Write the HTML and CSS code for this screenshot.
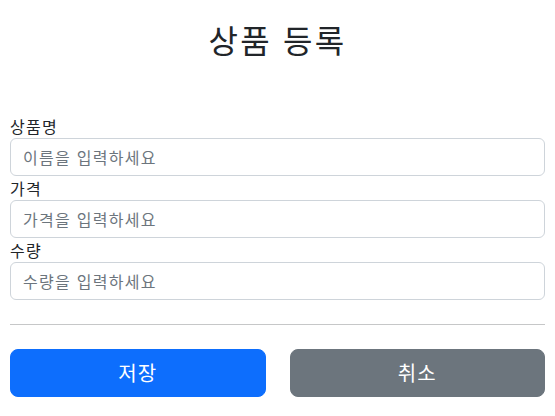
FILE: index.html
```html
<!DOCTYPE html>
<html lang="ko">
<head>
<meta charset="utf-8">
<link rel="stylesheet" href="styles.css">
</head>
<body>
<div class="container">
  <div class="title-box">
    <h2 class="title">상품 등록</h2>
  </div>
  <form class="form">
    <div class="field">
      <label class="label" for="itemName">상품명</label>
      <input class="input" id="itemName" type="text" placeholder="이름을 입력하세요">
    </div>
    <div class="field">
      <label class="label" for="price">가격</label>
      <input class="input" id="price" type="text" placeholder="가격을 입력하세요">
    </div>
    <div class="field">
      <label class="label" for="quantity">수량</label>
      <input class="input" id="quantity" type="text" placeholder="수량을 입력하세요">
    </div>
    <hr class="divider">
    <div class="actions">
      <button class="btn btn-primary" type="button">저장</button>
      <button class="btn btn-secondary" type="button">취소</button>
    </div>
  </form>
</div>
</body>
</html>
```
FILE: styles.css
```css
* { box-sizing: border-box; }
html, body { margin: 0; padding: 0; background: #fff; }
body {
  font-family: "Noto Sans CJK KR", "Noto Sans", "Liberation Sans", sans-serif;
  font-size: 16px;
  line-height: 1.5;
  color: #212529;
  letter-spacing: 0.08em;
}
.container { padding: 0 10px; }
.title-box { padding-top: 20px; padding-bottom: 48px; text-align: center; }
.title {
  margin: 0 0 8px 0;
  font-size: 32px;
  font-weight: 400;
  line-height: 1.2;
  letter-spacing: 0.07em;
}
.form { margin: 0; }
.field { display: flex; flex-direction: column; }
.label { display: block; height: 24px; }
.input {
  display: block;
  width: 100%;
  height: 38px;
  padding: 6px 12px;
  font-family: inherit;
  font-size: 16px;
  line-height: 1.5;
  letter-spacing: 0.08em;
  color: #212529;
  background: #fff;
  border: 1px solid #ced4da;
  border-radius: 6px;
}
.input::placeholder { color: #6c757d; }
.divider {
  margin: 24px 0;
  border: 0;
  border-top: 1px solid #c6c7c8;
  height: 0;
}
.actions { display: grid; grid-template-columns: 1fr 1fr; column-gap: 24px; }
.btn {
  height: 48px;
  padding: 8px 16px;
  font-family: inherit;
  font-size: 20px;
  line-height: 1.5;
  letter-spacing: 0.05em;
  color: #fff;
  border: 1px solid transparent;
  border-radius: 8px;
}
.btn-primary { background: #0d6efd; border-color: #0d6efd; }
.btn-secondary { background: #6c757d; border-color: #6c757d; }
```
